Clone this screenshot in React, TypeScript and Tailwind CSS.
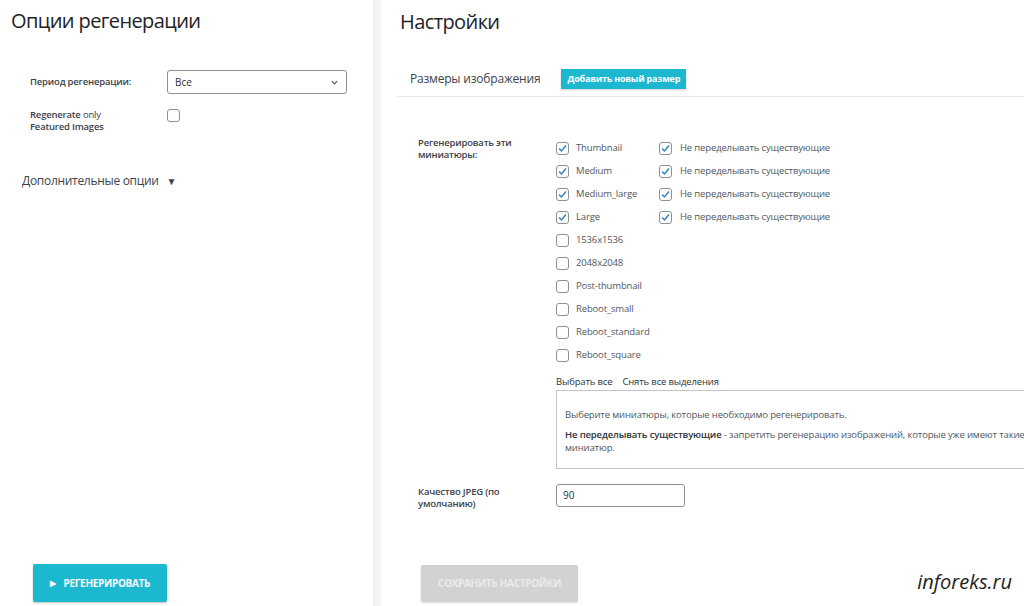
import React from 'react';

const SIZES = [
  { name: 'Thumbnail', checked: true },
  { name: 'Medium', checked: true },
  { name: 'Medium_large', checked: true },
  { name: 'Large', checked: true },
  { name: '1536x1536', checked: false },
  { name: '2048x2048', checked: false },
  { name: 'Post-thumbnail', checked: false },
  { name: 'Reboot_small', checked: false },
  { name: 'Reboot_standard', checked: false },
  { name: 'Reboot_square', checked: false },
];

function Box({ checked }: { checked: boolean }) {
  return (
    <span className="flex h-[13px] w-[13px] shrink-0 items-center justify-center rounded-[3px] border border-[#8c8f94] bg-white">
      {checked && (
        <svg viewBox="0 0 12 12" className="h-[11px] w-[11px]">
          <path d="M2.3 6.2 L4.9 8.7 L9.8 2.8" fill="none" stroke="#3a86b8" strokeWidth="1.7" />
        </svg>
      )}
    </span>
  );
}

export default function App() {
  return (
    <div
      className="flex h-[606px] w-[1024px] overflow-hidden bg-white text-[#3c434a]"
      style={{ fontFamily: '"Open Sans", "Noto Sans", sans-serif' }}
    >
      {/* left column */}
      <div className="flex w-[373px] shrink-0 flex-col">
        <h1 className="pl-[11px] pt-[7px] text-[20px] font-normal leading-[28px] tracking-[-0.6px] text-[#1d2327]">Опции регенерации</h1>

        <div className="mt-[35px] flex items-center pl-[30px]">
          <div className="w-[137px] text-[9.5px] font-semibold tracking-[-0.2px]">Период регенерации:</div>
          <div className="flex h-[24px] w-[180px] items-center justify-between rounded-[3px] border border-[#8c8f94] px-[7px] text-[10px] text-[#2c3338]">
            <span>Все</span>
            <svg viewBox="0 0 10 10" className="h-[9px] w-[9px]">
              <path d="M2 3.5 L5 6.5 L8 3.5" fill="none" stroke="#50575e" strokeWidth="1.3" />
            </svg>
          </div>
        </div>

        <div className="mt-[15px] flex items-start pl-[30px]">
          <div className="w-[137px] text-[9.5px] leading-[12px] tracking-[-0.2px]">
            <span className="font-semibold">Regenerate</span> only
            <br />
            <span className="font-semibold">Featured Images</span>
          </div>
          <Box checked={false} />
        </div>

        <div className="mt-[39px] flex items-center gap-[8px] pl-[22px] text-[12px] tracking-[-0.3px] text-[#3c434a]">
          <span>Дополнительные опции</span>
          <span className="text-[10px]">▼</span>
        </div>

        <div className="mt-auto mb-[4px] pl-[33px]">
          <button className="flex h-[38px] w-[134px] items-center justify-center gap-[8px] rounded-[2px] bg-[#1cb8d0] text-[10px] font-bold uppercase tracking-[-0.3px] text-white shadow-[0_1px_2px_rgba(0,0,0,0.25)]">
            <span className="text-[8px]">▶</span>
            <span>Регенерировать</span>
          </button>
        </div>
      </div>

      {/* divider */}
      <div className="w-[9px] shrink-0 bg-gradient-to-r from-[#f0f0f1] to-[#f7f7f7]" />

      {/* right column */}
      <div className="flex min-w-0 flex-1 flex-col">
        <h1 className="pl-[18px] pt-[8px] text-[20px] font-normal leading-[28px] tracking-[-0.6px] text-[#1d2327]">Настройки</h1>

        <div className="ml-[15px] mt-[33px] flex items-center border-b border-[#e8e8e8] pb-[7px] pl-[13px]">
          <span className="text-[12px] tracking-[-0.2px] text-[#3c434a]">Размеры изображения</span>
          <span className="ml-[21px] flex h-[20px] w-[125px] items-center justify-center bg-[#1cb8d0] text-[9px] font-bold tracking-[-0.2px] text-white shadow-[0_1px_2px_rgba(0,0,0,0.2)]">
            Добавить новый размер
          </span>
        </div>

        <div className="mt-[40px] flex pl-[36px]">
          <div className="w-[138px] shrink-0 text-[9.5px] font-semibold leading-[12px] tracking-[-0.2px]">
            Регенерировать эти
            <br />
            миниатюры:
          </div>
          <div className="flex flex-col">
            {SIZES.map((s) => (
              <div key={s.name} className="flex h-[23px] items-center text-[9.5px] tracking-[-0.15px] text-[#50575e]">
                <Box checked={s.checked} />
                <span className="ml-[7px] w-[83px]">{s.name}</span>
                {s.checked && (
                  <>
                    <Box checked />
                    <span className="ml-[8px]">Не переделывать существующие</span>
                  </>
                )}
              </div>
            ))}
          </div>
        </div>

        <div className="ml-[174px] mt-[8px] flex gap-[10px] text-[9.5px] tracking-[-0.15px] text-[#2c3338]">
          <span>Выбрать все</span>
          <span>Снять все выделения</span>
        </div>
        <div className="ml-[174px] mt-[1px] h-[79px] w-[600px] shrink-0 border border-[#c3c4c7] px-[8px] pt-[17px] text-[9.5px] leading-[13px] tracking-[-0.15px] text-[#50575e]">
          <p className="whitespace-nowrap">Выберите миниатюры, которые необходимо регенерировать.</p>
          <p className="mt-[7px] whitespace-nowrap">
            <span className="font-semibold text-[#2c3338]">Не переделывать существующие</span> - запретить регенерацию изображений, которые уже имеют такие размеры
            <br />
            миниатюр.
          </p>
        </div>

        <div className="mt-[15px] flex items-start pl-[36px]">
          <div className="w-[138px] pt-[2px] text-[9.5px] font-semibold leading-[12px] tracking-[-0.2px]">
            Качество JPEG (по
            <br />
            умолчанию)
          </div>
          <div className="flex h-[23px] w-[129px] items-center rounded-[3px] border border-[#8c8f94] px-[6px] text-[10px] text-[#2c3338]">
            90
          </div>
        </div>

        <div className="mt-auto mb-[4px] flex items-end justify-between pl-[39px] pr-[12px]">
          <button className="flex h-[37px] w-[157px] items-center justify-center rounded-[2px] bg-[#d2d2d2] text-[10px] font-bold uppercase tracking-[-0.3px] text-[#ebebeb] shadow-[0_1px_2px_rgba(0,0,0,0.15)]">
            Сохранить настройки
          </button>
          <span className="mb-[7px] text-[20px] italic leading-[26px] text-[#222]">inforeks.ru</span>
        </div>
      </div>
    </div>
  );
}
